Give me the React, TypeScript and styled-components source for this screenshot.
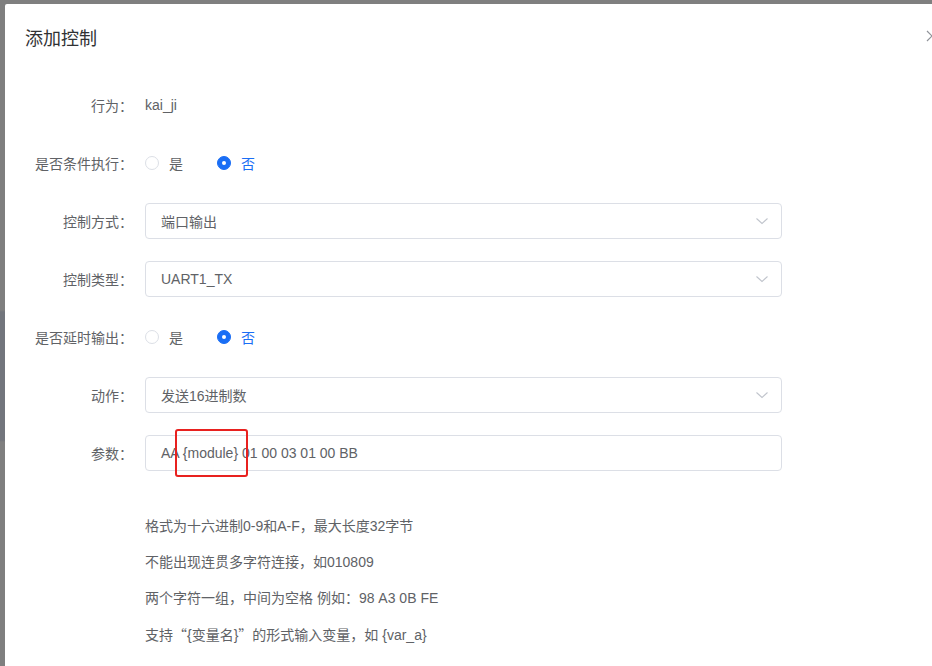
import React from 'react';
import styled, { createGlobalStyle } from 'styled-components';

const GlobalStyle = createGlobalStyle`
  html, body {
    margin: 0;
    padding: 0;
    overflow: hidden;
  }
  body {
    font-family: "Liberation Sans", "Noto Sans CJK SC", sans-serif;
  }
`;

const Overlay = styled.div`
  width: 932px;
  height: 666px;
  overflow: hidden;
  background: linear-gradient(
    to bottom,
    #7f7f7f 0px,
    #7f7f7f 310px,
    #72757c 312px,
    #72757c 440px,
    #7f7f7f 442px
  );
  padding: 4px 0 0 5px;
  box-sizing: border-box;
`;

const Modal = styled.div`
  position: relative;
  width: 960px;
  min-height: 700px;
  background: #fff;
  border-radius: 2px;
`;

const Header = styled.div`
  padding: 21px 20px 10px;
`;

const Title = styled.span`
  font-size: 18px;
  line-height: 24px;
  color: #303133;
  font-family: "Noto Sans CJK SC", sans-serif;
`;

const Close = styled.button`
  position: absolute;
  top: 26px;
  right: 27px;
  width: 12px;
  height: 12px;
  padding: 0;
  border: none;
  background: none;
  color: #909399;
  display: flex;
`;

const Body = styled.div`
  padding-top: 28px;
`;

const Row = styled.div`
  display: flex;
  align-items: center;
  height: 36px;
  margin-bottom: 22px;
`;

const Label = styled.label`
  width: 128px;
  flex: none;
  text-align: right;
  font-size: 14px;
  color: #606266;
  font-family: "Noto Sans CJK SC", sans-serif;
`;

const Control = styled.div`
  position: relative;
  margin-left: 12px;
  width: 637px;
  display: flex;
  align-items: center;
  font-size: 14px;
  color: #606266;
`;

const Field = styled.div`
  box-sizing: border-box;
  width: 100%;
  height: 36px;
  border: 1px solid #dcdfe6;
  border-radius: 4px;
  padding: 0 15px;
  display: flex;
  align-items: center;
  justify-content: space-between;
  font-size: 14px;
  color: #606266;
`;

const Chevron = styled.span`
  color: #c0c4cc;
  display: flex;
  margin-right: -3px;
`;

const RadioOption = styled.span<{ $checked?: boolean }>`
  display: inline-flex;
  align-items: center;
  margin-right: 34px;
  font-size: 14px;
  color: ${p => (p.$checked ? '#1a6ef5' : '#606266')};
  font-family: "Noto Sans CJK SC", sans-serif;
`;

const RadioDot = styled.span<{ $checked?: boolean }>`
  box-sizing: border-box;
  width: 14px;
  height: 14px;
  border-radius: 50%;
  margin-right: 10px;
  border: 1px solid ${p => (p.$checked ? '#1a6ef5' : '#dcdfe6')};
  background: ${p => (p.$checked ? '#1a6ef5' : '#fff')};
  display: flex;
  align-items: center;
  justify-content: center;
  &::after {
    content: '';
    width: 4px;
    height: 4px;
    border-radius: 50%;
    background: #fff;
    display: ${p => (p.$checked ? 'block' : 'none')};
  }
`;

const Highlight = styled.div`
  position: absolute;
  left: 30px;
  top: -6px;
  width: 73px;
  height: 48px;
  box-sizing: border-box;
  border: 2px solid #e8211f;
  border-radius: 3px;
  pointer-events: none;
`;

const Help = styled.div`
  margin: 37px 0 0 140px;
`;

const HelpLine = styled.p`
  margin: 0;
  line-height: 36px;
  font-size: 14px;
  color: #606266;
`;

const Quote = styled.span`
  font-family: "Noto Sans CJK SC", sans-serif;
`;

const ArrowDown = () => (
  <svg width="14" height="14" viewBox="0 0 14 14" fill="none">
    <path d="M1.5 4.5 L7 9.5 L12.5 4.5" stroke="currentColor" strokeWidth="1.1" />
  </svg>
);

const Radios = ({ value }: { value: boolean }) => (
  <Control>
    <RadioOption $checked={value}>
      <RadioDot $checked={value} />是
    </RadioOption>
    <RadioOption $checked={!value}>
      <RadioDot $checked={!value} />否
    </RadioOption>
  </Control>
);

const Select = ({ value }: { value: string }) => (
  <Control>
    <Field>
      <span>{value}</span>
      <Chevron><ArrowDown /></Chevron>
    </Field>
  </Control>
);

export default function App() {
  return (
    <>
      <GlobalStyle />
      <Overlay>
        <Modal>
          <Header>
            <Title>添加控制</Title>
          </Header>
          <Close aria-label="close">
            <svg width="12" height="12" viewBox="0 0 12 12">
              <path d="M1 1 L11 11 M11 1 L1 11" stroke="currentColor" strokeWidth="1.2" />
            </svg>
          </Close>
          <Body>
            <Row>
              <Label>行为：</Label>
              <Control>kai_ji</Control>
            </Row>
            <Row>
              <Label>是否条件执行：</Label>
              <Radios value={false} />
            </Row>
            <Row>
              <Label>控制方式：</Label>
              <Select value="端口输出" />
            </Row>
            <Row>
              <Label>控制类型：</Label>
              <Select value="UART1_TX" />
            </Row>
            <Row>
              <Label>是否延时输出：</Label>
              <Radios value={false} />
            </Row>
            <Row>
              <Label>动作：</Label>
              <Select value="发送16进制数" />
            </Row>
            <Row>
              <Label>参数：</Label>
              <Control>
                <Field>
                  <span>AA {'{module}'} 01 00 03 01 00 BB</span>
                </Field>
                <Highlight />
              </Control>
            </Row>
            <Help>
              <HelpLine>格式为十六进制0-9和A-F，最大长度32字节</HelpLine>
              <HelpLine>不能出现连贯多字符连接，如010809</HelpLine>
              <HelpLine>两个字符一组，中间为空格 例如：98 A3 0B FE</HelpLine>
              <HelpLine>
                支持<Quote>“</Quote>{'{变量名}'}<Quote>”</Quote>的形式输入变量，如 {'{var_a}'}
              </HelpLine>
            </Help>
          </Body>
        </Modal>
      </Overlay>
    </>
  );
}
